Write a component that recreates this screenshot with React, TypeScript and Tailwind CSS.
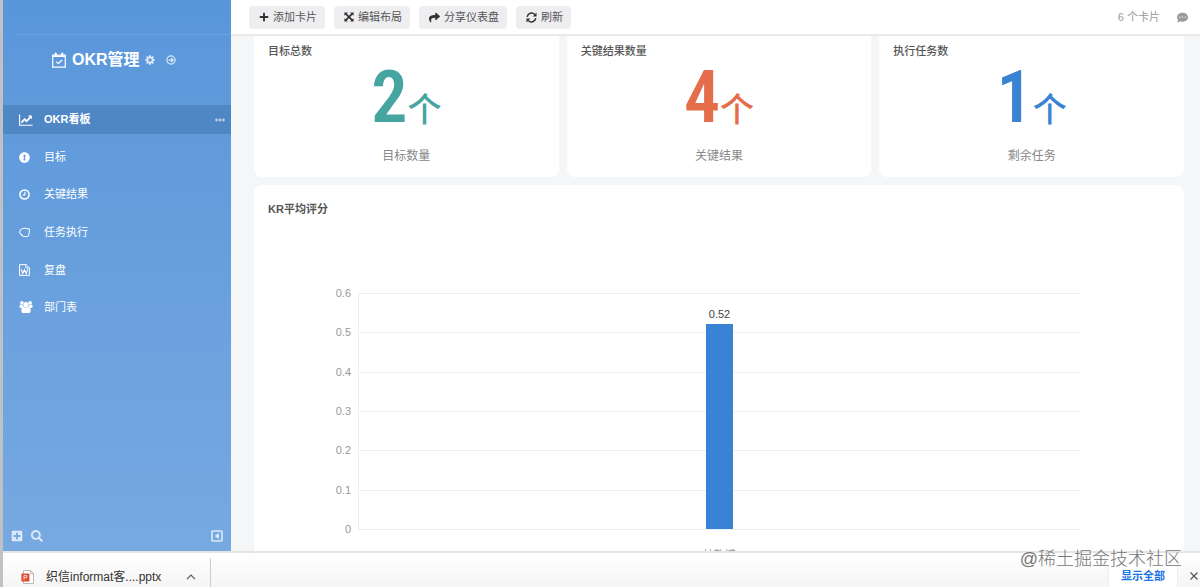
import React from "react";
import {
  FaPlus,
  FaShare,
  FaExclamationCircle,
  FaPlusSquare,
  FaSearch,
  FaCommentDots,
  FaEllipsisH,
} from "react-icons/fa";

type IconProps = { className?: string };

function CalendarIcon({ className }: IconProps) {
  return (
    <svg viewBox="0 0 14 16" className={className} fill="none" stroke="currentColor">
      <path d="M0.7 3H13.3V15.2H0.7Z" strokeWidth="1.2" />
      <path d="M0.7 3.4H13.3V5H0.7Z" fill="currentColor" stroke="none" />
      <path d="M3.7 1.4V4M10.3 1.4V4" strokeWidth="2" strokeLinecap="round" />
      <path d="M4.2 9.6L6.3 11.7 10 8" strokeWidth="1.2" />
    </svg>
  );
}

function ExpandIcon({ className }: IconProps) {
  return (
    <svg viewBox="0 0 12 12" className={className} fill="currentColor">
      <path d="M0.5 0.5H4.6L3.4 1.9 6 4.5 8.6 1.9 7.4 0.5H11.5V4.6L10.1 3.4 7.5 6 10.1 8.6 11.5 7.4V11.5H7.4L8.6 10.1 6 7.5 3.4 10.1 4.6 11.5H0.5V7.4L1.9 8.6 4.5 6 1.9 3.4 0.5 4.6Z" />
    </svg>
  );
}

function RefreshIcon({ className }: IconProps) {
  return (
    <svg viewBox="0 0 12 12" className={className} fill="none" stroke="currentColor" strokeWidth="1.6">
      <path d="M1.3 5.2A4.8 4.8 0 0 1 9.6 2.8M10.7 6.8A4.8 4.8 0 0 1 2.4 9.2" />
      <path d="M11.5 0.6V4.8H7.3ZM0.5 11.4V7.2H4.7Z" fill="currentColor" stroke="none" />
    </svg>
  );
}

function GearIcon({ className }: IconProps) {
  return (
    <svg viewBox="0 0 12 12" className={className} fill="none" stroke="currentColor">
      <circle cx="6" cy="6" r="3.1" strokeWidth="2" />
      <path
        d="M6 0.4V2.6M6 9.4V11.6M0.4 6H2.6M9.4 6H11.6M2 2L3.6 3.6M8.4 8.4L10 10M10 2L8.4 3.6M3.6 8.4L2 10"
        strokeWidth="2.2"
      />
    </svg>
  );
}

function ArrowCircleIcon({ className }: IconProps) {
  return (
    <svg viewBox="0 0 12 12" className={className} fill="none" stroke="currentColor" strokeWidth="1.5">
      <circle cx="6" cy="6" r="4.9" />
      <path d="M3 6H8.4M6 3.4L8.6 6 6 8.6" />
    </svg>
  );
}

function LineChartIcon({ className }: IconProps) {
  return (
    <svg viewBox="0 0 14 12" className={className} fill="none" stroke="currentColor">
      <path d="M0.6 0.5V11.2H13.6" strokeWidth="1.1" />
      <path d="M2.4 8.6L5.6 5.2 7.6 7.2 11.4 3.2" strokeWidth="1.7" />
      <path d="M9 1.4H12.8V5.2Z" fill="currentColor" stroke="none" />
    </svg>
  );
}

function ClockIcon({ className }: IconProps) {
  return (
    <svg viewBox="0 0 12 12" className={className} fill="none" stroke="currentColor" strokeWidth="1.7">
      <circle cx="6" cy="6" r="5" />
      <path d="M6.4 3V6.5H3.8" strokeWidth="1.2" />
    </svg>
  );
}

function TagIcon({ className }: IconProps) {
  return (
    <svg viewBox="0 0 12 12" className={className} fill="none" stroke="currentColor" strokeWidth="1.1" strokeLinejoin="round">
      <path d="M3.2 1.8Q6 0.8 8.4 1.6L11.3 2.2Q11.6 6 10.4 9.4Q9.8 10.5 8 10.4L4.4 10.2Q3.4 9 2.4 8.2Q0.8 7.2 0.8 5.6Q0.9 2.8 3.2 1.8Z" />
    </svg>
  );
}

function WordIcon({ className }: IconProps) {
  return (
    <svg viewBox="0 0 11 12" className={className} fill="none" stroke="currentColor">
      <path d="M0.6 0.6H7L10.4 3.8V11.4H0.6Z" />
      <path d="M6.8 0.8V4H10.2" strokeWidth="0.9" />
      <path d="M2.4 5.4L3.7 9.6 5.5 5.8 7.3 9.6 8.6 5.4" strokeWidth="1.1" />
    </svg>
  );
}

function UsersIcon({ className }: IconProps) {
  return (
    <svg viewBox="0 0 14 12" className={className} fill="currentColor">
      <circle cx="2.9" cy="1.9" r="1.8" />
      <circle cx="11.1" cy="1.9" r="1.8" />
      <circle cx="7" cy="3.6" r="2.6" />
      <path d="M0.6 6.4Q0 4.2 1.2 3.6Q3 4.6 3.9 3.8Q4 5.2 4.8 6.2Q3.6 6.2 3 6.9H1.4Q0.8 6.9 0.6 6.4Z" />
      <path d="M13.4 6.4Q14 4.2 12.8 3.6Q11 4.6 10.1 3.8Q10 5.2 9.2 6.2Q10.4 6.2 11 6.9H12.6Q13.2 6.9 13.4 6.4Z" />
      <path d="M4.4 5.8Q7 7 9.6 5.8Q11.6 6.2 11.7 10Q11.7 11.9 10 11.9H4Q2.3 11.9 2.3 10Q2.4 6.2 4.4 5.8Z" />
    </svg>
  );
}

function CollapseIcon({ className }: IconProps) {
  return (
    <svg viewBox="0 0 12 12" className={className} fill="none" stroke="currentColor" strokeWidth="1.6">
      <rect x="1" y="1" width="10" height="10" rx="1" />
      <path d="M8 3V9L3.6 6Z" fill="currentColor" stroke="none" />
    </svg>
  );
}

function PptIcon({ className }: IconProps) {
  return (
    <svg viewBox="0 0 13 14" className={className}>
      <path d="M2.5 0.5H9.5L12.5 3.5V13.5H2.5Z" fill="#fff" stroke="#b0aaaa" strokeWidth="0.8" />
      <path d="M9.5 0.5V3.5H12.5" fill="none" stroke="#b0aaaa" strokeWidth="0.8" />
      <rect x="0.4" y="3.4" width="8" height="8" rx="0.5" fill="#e2492f" />
      <path d="M3 9.7V5.4H5.8V7.7H3" fill="none" stroke="#fff" strokeWidth="0.8" />
    </svg>
  );
}

const menu = [
  { label: "OKR看板", icon: <LineChartIcon className="w-3.5 h-3" />, active: true },
  { label: "目标", icon: <FaExclamationCircle className="w-[11px] h-[11px]" /> },
  { label: "关键结果", icon: <ClockIcon className="w-[11px] h-[11px]" /> },
  { label: "任务执行", icon: <TagIcon className="w-[11px] h-[11px]" /> },
  { label: "复盘", icon: <WordIcon className="w-[11px] h-3" /> },
  { label: "部门表", icon: <UsersIcon className="w-3.5 h-3" /> },
];

const actions = [
  { label: "添加卡片", icon: <FaPlus className="w-2.5 h-2.5" /> },
  { label: "编辑布局", icon: <ExpandIcon className="w-2.5 h-2.5" /> },
  { label: "分享仪表盘", icon: <FaShare className="w-[11px] h-[11px]" /> },
  { label: "刷新", icon: <RefreshIcon className="w-[11px] h-[11px]" /> },
];

const stats = [
  { title: "目标总数", value: 2, label: "目标数量", color: "text-[#46a5a0]" },
  { title: "关键结果数量", value: 4, label: "关键结果", color: "text-[#e56d49]" },
  { title: "执行任务数", value: 1, label: "剩余任务", color: "text-[#3a83d4]" },
];

const ticks = ["0.6", "0.5", "0.4", "0.3", "0.2", "0.1", "0"];
const score = 0.52;
const maxScore = 0.6;

function Sidebar() {
  return (
    <aside className="w-[228px] shrink-0 flex flex-col bg-linear-to-b from-[#5996da] to-[#77a9e1] text-white">
      <div className="h-[35px] ml-3 border-b border-white/10" />
      <div className="h-[70px] pl-[49px] pb-5 flex items-center">
        <CalendarIcon className="w-3.5 h-4" />
        <h1 className="ml-1.5 text-base font-bold">OKR管理</h1>
        <button aria-label="设置" className="ml-[5px] opacity-80">
          <GearIcon className="w-2.5 h-2.5" />
        </button>
        <button aria-label="进入" className="ml-[11px] opacity-80">
          <ArrowCircleIcon className="w-2.5 h-2.5" />
        </button>
      </div>
      <nav className="h-[217px] flex flex-col justify-between">
        {menu.map((item) => (
          <a
            key={item.label}
            href="#"
            className={
              item.active
                ? "h-[29px] pl-4 pr-1.5 flex items-center bg-[#4f87c5] font-bold"
                : "h-[29px] pl-4 pr-1.5 flex items-center"
            }
          >
            <span className="w-[25px]">{item.icon}</span>
            <span className="flex-1">{item.label}</span>
            {item.active && <FaEllipsisH className="w-2.5 h-2.5 opacity-60" />}
          </a>
        ))}
      </nav>
      <div className="mt-auto h-[30px] px-2 flex items-center gap-2 text-white/75">
        <button aria-label="新增">
          <FaPlusSquare className="w-3 h-3" />
        </button>
        <button aria-label="搜索">
          <FaSearch className="w-3 h-3" />
        </button>
        <button aria-label="收起" className="ml-auto">
          <CollapseIcon className="w-3 h-3" />
        </button>
      </div>
    </aside>
  );
}

function Toolbar() {
  return (
    <header className="h-9 shrink-0 pl-[18px] pr-3 flex items-center gap-[9px] bg-white border-b-2 border-[#e9eaeb]">
      {actions.map((action) => (
        <button
          key={action.label}
          className="h-[23px] pl-2.5 pr-2 flex items-center gap-1 rounded bg-[#eeeef1] text-[11px] text-[#555]"
        >
          <span className="text-[#333]">{action.icon}</span>
          {action.label}
        </button>
      ))}
      <span className="ml-auto text-[11px] text-[#999]">6 个卡片</span>
      <button aria-label="评论" className="ml-2 text-[#999]">
        <FaCommentDots className="w-[11px] h-[11px]" />
      </button>
    </header>
  );
}

function ScoreChart() {
  return (
    <div className="mt-[69px] ml-20 mr-[104px] flex gap-[7px]">
      <div className="w-[17px] h-[250px] flex flex-col justify-between text-right text-[11px] leading-[14px] text-[#999]">
        {ticks.map((tick) => (
          <span key={tick}>{tick}</span>
        ))}
      </div>
      <div className="flex-1 pt-[7px]">
        <div className="relative h-[237px] flex flex-col border-l border-b border-[#eeeff0]">
          {ticks.slice(1).map((tick) => (
            <div key={tick} className="flex-1 border-t border-[#eeeff0]" />
          ))}
          <div className="absolute inset-0 flex flex-col items-center justify-end">
            <span className="text-[11px] leading-[19px] text-[#444]">{score}</span>
            <div
              className="w-[27px] bg-[#3a83d4]"
              style={{ height: `${(score / maxScore) * 100}%` }}
            />
          </div>
        </div>
        <div className="pt-[18px] text-center text-[11px] leading-[14px] text-[#999]">林敬博</div>
      </div>
    </div>
  );
}

function DownloadBar() {
  return (
    <footer className="relative h-9 shrink-0 flex items-end bg-linear-to-b from-white to-[#f5f5f5] border-t-2 border-[#e4e4e4] text-xs text-[#333]">
      <div className="w-[208px] h-[29px] pl-[18px] pr-3.5 pt-2 flex items-center border-r border-[#ccc]">
        <PptIcon className="w-[13px] h-3.5" />
        <span className="ml-3">织信informat客....pptx</span>
        <button aria-label="更多" className="ml-auto">
          <svg viewBox="0 0 10 6" className="w-2.5 h-1.5" fill="none" stroke="#555" strokeWidth="1.2">
            <path d="M1 5.2L5 1.2 9 5.2" />
          </svg>
        </button>
      </div>
      <button className="ml-auto h-[22px] px-3 border-x border-[#eee] bg-white text-[11px] font-bold text-[#1a73e8]">
        显示全部
      </button>
      <button aria-label="关闭" className="h-[22px] pl-3 pr-0.5">
        <svg viewBox="0 0 8 8" className="w-2 h-2" stroke="#555" strokeWidth="1.2">
          <path d="M0.5 0.5L7.5 7.5M7.5 0.5L0.5 7.5" />
        </svg>
      </button>
      <div className="absolute right-[18px] -top-1.5 text-lg leading-6 font-light text-[#777] pointer-events-none">
        @稀土掘金技术社区
      </div>
    </footer>
  );
}

export default function App() {
  return (
    <div className="h-screen flex overflow-hidden font-['Liberation_Sans','Noto_Sans_CJK_SC',sans-serif] text-[11px]">
      <div className="w-[3px] shrink-0 bg-[#bfc2c4]" />
      <div className="flex-1 min-w-0 flex flex-col">
        <div className="flex-1 min-h-0 flex">
          <Sidebar />
          <main className="flex-1 min-w-0 flex flex-col bg-[#f4f6f8]">
            <Toolbar />
            <div className="flex-1 min-h-0 overflow-hidden pl-[23px] pr-4 flex flex-col gap-2">
              <div className="shrink-0 grid grid-cols-3 gap-2">
                {stats.map((stat) => (
                  <section key={stat.title} className="h-[141px] px-3.5 pt-1.5 rounded-b-lg bg-white">
                    <h2 className="leading-[18px] font-medium text-[#555]">{stat.title}</h2>
                    <div className={`mt-0.5 h-[72px] flex items-baseline justify-center ${stat.color}`}>
                      <span className="font-['Roboto_Condensed','Liberation_Sans_Narrow',sans-serif] text-[72px] leading-[72px] font-semibold">
                        {stat.value}
                      </span>
                      <span className="text-[34px] leading-10 font-medium">个</span>
                    </div>
                    <p className="mt-3 text-center text-xs leading-5 text-[#888]">{stat.label}</p>
                  </section>
                ))}
              </div>
              <section className="shrink-0 h-[400px] pt-4 rounded-lg bg-white">
                <h2 className="px-3.5 leading-4 font-bold text-[#555]">KR平均评分</h2>
                <ScoreChart />
              </section>
            </div>
          </main>
        </div>
        <DownloadBar />
      </div>
    </div>
  );
}
